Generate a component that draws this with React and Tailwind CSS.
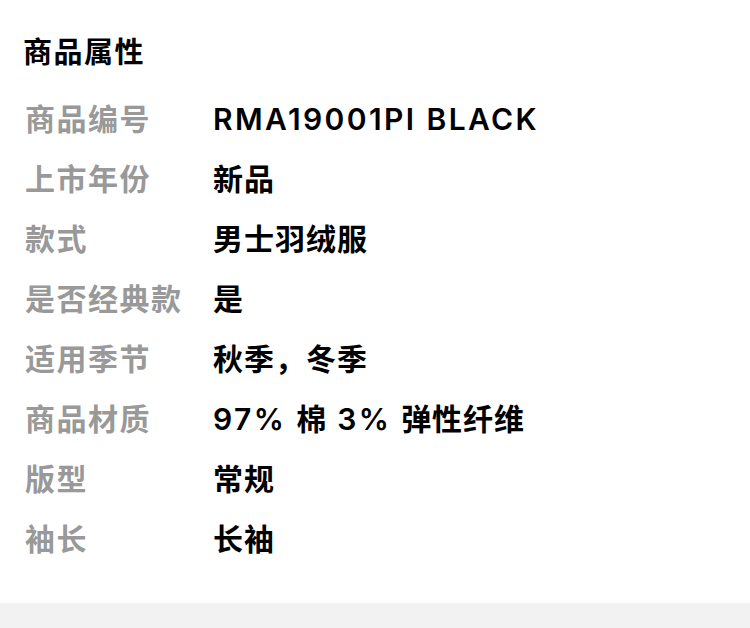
const rows = [
  ["商品编号", "RMA19001PI BLACK"],
  ["上市年份", "新品"],
  ["款式", "男士羽绒服"],
  ["是否经典款", "是"],
  ["适用季节", "秋季，冬季"],
  ["商品材质", "97% 棉 3% 弹性纤维"],
  ["版型", "常规"],
  ["袖长", "长袖"],
];

// latin runs are set a little wider than the CJK ones
const Value = ({ text }) => {
  const parts = text.match(/[\x00-\x7f]+|[^\x00-\x7f]+/g);
  return (
    <div className="text-[30px] font-semibold text-black whitespace-pre">
      {parts.map((p, i) =>
        /^[\x00-\x7f]+$/.test(p) ? (
          <span key={i} className="tracking-[2.4px]">
            {p}
          </span>
        ) : (
          <span key={i} className="tracking-[1px]">
            {p}
          </span>
        )
      )}
    </div>
  );
};

const App = () => {
  return (
    <div
      className="w-[750px] h-[628px] bg-white flex flex-col"
      style={{ fontFamily: 'Inter, "Noto Sans CJK SC", sans-serif' }}
    >
      <div className="flex-1 pl-[23px] pt-[32px]">
        <div className="text-[29px] font-bold text-black leading-[42px] tracking-[1.5px]">
          商品属性
        </div>
        <div className="flex flex-col mt-[15px]">
          {rows.map(([k, v]) => (
            <div key={k} className="flex items-center h-[60px]">
              <div className="w-[190px] pl-[2px] text-[30px] font-bold text-[#999999] tracking-[1.5px]">
                {k}
              </div>
              <Value text={v} />
            </div>
          ))}
        </div>
      </div>
      <div className="h-[25px] bg-[#f2f2f2]" />
    </div>
  );
};

export default App;
